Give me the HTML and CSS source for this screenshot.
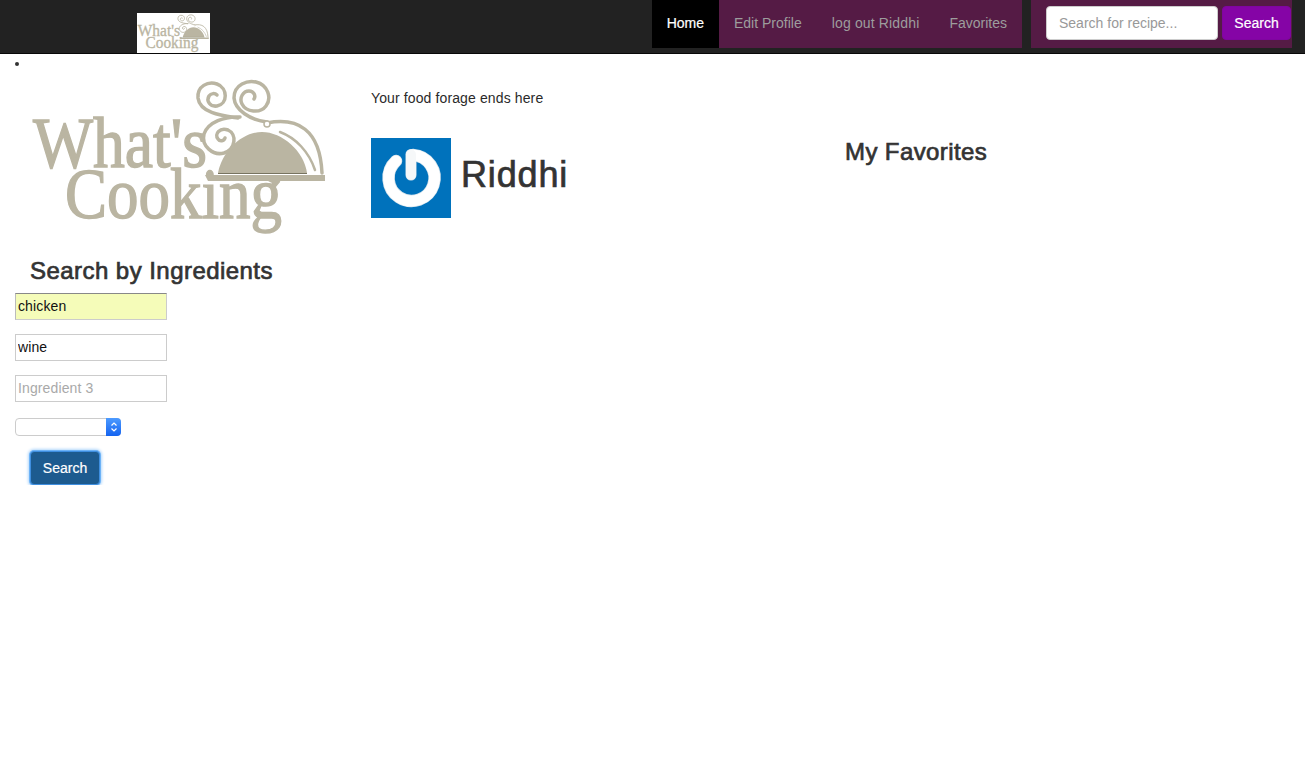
FILE: index.html
```html
<!DOCTYPE html>
<html lang="en">
<head>
<meta charset="utf-8">
<title>What's Cooking</title>
<link rel="stylesheet" href="styles.css">
</head>
<body>
<header class="navbar">
  <a class="brand" href="#" aria-label="What's Cooking">
    <svg class="brand-logo" viewBox="0 0 300 160">
      <g class="logo-solid">
        <text class="logo-word"><tspan x="3" y="91" textLength="174" lengthAdjust="spacingAndGlyphs">What's</tspan> <tspan x="35" y="142" textLength="217" lengthAdjust="spacingAndGlyphs">Cooking</tspan></text>
        <path class="logo-fill" d="M188 97C192 75 212 56 232 56s42 19 45 41z"/>
        <path class="logo-fill" d="M175 99H295v6H250l-6 3-6-3H178z"/>
      </g>
      <path class="logo-line" d="M188 97.500H277"/>
      <g class="logo-curls">
        <path d="M237 47c30-6 53 6 55 50"/>
        <path class="logo-thin" d="M250 56c16 6 29 20 35 38"/>
        <path d="M208 42C195 40 170 38 168 22 167 10 178 5 187 8c11 4 11 20 0 22-7 1-11-5-8-10 2-3 6-3 8-1"/>
        <path d="M237 46C220 44 205 34 204 22 204 8 218 4 226 6c12 3 16 16 10 24-6 8-20 6-24-2-3-6 1-13 7-13 5 0 7 5 5 8"/>
        <path d="M210 41C195 40 178 46 174 58c-3 12 9 22 20 19 12-4 13-19 4-23-8-3-14 4-10 9 2 3 6 2 7-1"/>
      </g>
      <circle class="logo-knob" cx="237" cy="48" r="3"/>
    </svg>
  </a>
  <div class="nav-right">
    <nav class="nav-links">
      <a class="nav-link active" href="#">Home</a>
      <a class="nav-link" href="#">Edit Profile</a>
      <a class="nav-link nav-link-wide" href="#">log out Riddhi</a>
      <a class="nav-link" href="#">Favorites</a>
    </nav>
    <form class="nav-search">
      <input class="nav-input" type="text" placeholder="Search for recipe...">
      <button class="nav-button" type="button">Search</button>
    </form>
  </div>
</header>

<ul class="bullet-list"><li></li></ul>

<main class="page">
  <aside class="sidebar">
    <svg class="hero-logo" viewBox="0 0 300 160" role="img" aria-label="What's Cooking logo">
      <g class="logo-solid">
        <text class="logo-word"><tspan x="3" y="91" textLength="174" lengthAdjust="spacingAndGlyphs">What's</tspan> <tspan x="35" y="142" textLength="217" lengthAdjust="spacingAndGlyphs">Cooking</tspan></text>
        <path class="logo-fill" d="M188 97C192 75 212 56 232 56s42 19 45 41z"/>
        <path class="logo-fill" d="M175 99H295v6H250l-6 3-6-3H178z"/>
      </g>
      <path class="logo-line" d="M188 97.500H277"/>
      <g class="logo-curls">
        <path d="M237 47c30-6 53 6 55 50"/>
        <path class="logo-thin" d="M250 56c16 6 29 20 35 38"/>
        <path d="M208 42C195 40 170 38 168 22 167 10 178 5 187 8c11 4 11 20 0 22-7 1-11-5-8-10 2-3 6-3 8-1"/>
        <path d="M237 46C220 44 205 34 204 22 204 8 218 4 226 6c12 3 16 16 10 24-6 8-20 6-24-2-3-6 1-13 7-13 5 0 7 5 5 8"/>
        <path d="M210 41C195 40 178 46 174 58c-3 12 9 22 20 19 12-4 13-19 4-23-8-3-14 4-10 9 2 3 6 2 7-1"/>
      </g>
      <circle class="logo-knob" cx="237" cy="48" r="3"/>
    </svg>
    <h3 class="side-title">Search by Ingredients</h3>
    <form class="ingredients">
      <input class="field field-filled" type="text" value="chicken">
      <input class="field" type="text" value="wine">
      <input class="field" type="text" placeholder="Ingredient 3">
      <div class="select-wrap">
        <select class="select" aria-label="Cuisine"><option></option></select>
        <span class="select-arrow"><svg width="8" height="12" viewBox="0 0 8 12"><path d="M1.500 4.500 4 2l2.500 2.500M1.500 7.500 4 10l2.500-2.500" fill="none" stroke="#fff" stroke-width="1.200"/></svg></span>
      </div>
      <button class="search-button" type="button">Search</button>
    </form>
  </aside>

  <section class="content">
    <div class="profile">
      <p class="tagline">Your food forage ends here</p>
      <div class="user">
        <svg class="avatar" viewBox="0 0 80 80" role="img" aria-label="Avatar">
          <rect width="80" height="80" fill="#0072bc"/>
          <path d="M25 23A23 23 0 1 0 42 17" fill="none" stroke="#d5e3ec" stroke-width="12.500" stroke-linecap="round"/>
          <path d="M40 16.500V37" fill="none" stroke="#d5e3ec" stroke-width="11" stroke-linecap="round"/>
          <path d="M25 23A23 23 0 1 0 42 17" fill="none" stroke="#fff" stroke-width="11" stroke-linecap="round"/>
          <path d="M40 16.500V37" fill="none" stroke="#f6f8f9" stroke-width="10" stroke-linecap="round"/>
        </svg>
        <h1 class="user-name">Riddhi</h1>
      </div>
    </div>
    <div class="favorites">
      <h3 class="fav-title">My Favorites</h3>
    </div>
  </section>
</main>
</body>
</html>
```

FILE: styles.css
```css
* { box-sizing: border-box; }

html, body { margin: 0; padding: 0; }

body {
  background: #fff;
  color: #333;
  font-family: "Liberation Sans", Arial, sans-serif;
  font-size: 14px;
  line-height: 20px;
}

/* logo */
.logo-solid { fill: #bab5a2; }

.logo-word {
  font-family: "Liberation Serif", serif;
  font-size: 72px;
  stroke: #bab5a2;
  stroke-width: 1.4px;
}

.logo-line { fill: none; stroke: #77735f; stroke-width: 1; }

.logo-curls {
  fill: none;
  stroke: #bab5a2;
  stroke-width: 3.5;
  stroke-linecap: round;
}

.logo-curls .logo-thin { stroke-width: 2.5; }

.logo-knob { fill: #fff; stroke: #bab5a2; stroke-width: 1.5; }

/* navbar */
.navbar {
  display: flex;
  justify-content: space-between;
  height: 54px;
  background: #222;
  border-bottom: 1px solid #080808;
}

.brand {
  display: block;
  margin-left: 137px;
  margin-top: 13px;
  width: 73px;
  height: 40px;
  background: #fff;
}

.brand-logo { display: block; width: 73px; height: 40px; }

.nav-right {
  display: flex;
  gap: 9px;
  margin-right: 13px;
  height: 48px;
}

.nav-links {
  display: flex;
  background: #551b45;
}

.nav-link {
  display: block;
  padding: 13px 15px 15px;
  color: #9d9d9d;
  text-decoration: none;
}

.nav-link-wide { letter-spacing: 0.15px; }

.nav-link.active {
  background: #000;
  color: #fff;
  -webkit-text-stroke: 0.2px #fff;
}

.nav-search {
  display: flex;
  gap: 4px;
  align-items: flex-start;
  width: 261px;
  padding: 6px 1px 0 15px;
  background: #551b45;
}

.nav-input {
  width: 172px;
  height: 34px;
  padding: 6px 12px;
  border: 1px solid #ccc;
  border-radius: 4px;
  background: #fff;
  color: #555;
  font: inherit;
}

.nav-input::placeholder { color: #999; opacity: 1; }

.nav-button {
  width: 69px;
  height: 34px;
  padding: 0;
  border: 1px solid #7f05a0;
  border-radius: 4px;
  background: #8504a6;
  color: #fff;
  font: inherit;
  -webkit-text-stroke: 0.2px #fff;
}

/* stray list */
.bullet-list {
  margin: 0;
  padding-left: 30px;
  height: 20px;
}

.bullet-list li { height: 18px; line-height: 18px; }

/* page */
.page {
  display: grid;
  grid-template-columns: 356px 1fr;
}

.sidebar { padding-left: 15px; }

.hero-logo {
  display: block;
  width: 300px;
  height: 160px;
  margin: 2px 0 0 15px;
}

.side-title {
  margin: 22px 0 9px 15px;
  font-size: 24px;
  font-weight: 400;
  line-height: 26px;
  -webkit-text-stroke: 0.7px #333;
  letter-spacing: 0.45px;
}

.ingredients {
  display: flex;
  flex-direction: column;
  align-items: flex-start;
}

.field {
  width: 152px;
  height: 27px;
  margin-bottom: 14px;
  padding: 1px 2px 3px;
  border: 1px solid #ccc;
  border-radius: 0;
  background: #fff;
  color: #111;
  font: inherit;
  font-size: 14px;
  letter-spacing: 0.12px;
}

.field::placeholder { color: #a9a9a9; opacity: 1; }

.field-filled {
  background: #f5fcb9;
  border-top-color: #888;
  border-left-color: #bbb;
}

.select-wrap {
  position: relative;
  width: 106px;
  height: 18px;
  margin-top: 2px;
}

.select {
  display: block;
  width: 106px;
  height: 18px;
  border: 1px solid #ccc;
  border-radius: 4px;
  background: #fff;
  appearance: none;
  -webkit-appearance: none;
}

.select-arrow {
  position: absolute;
  top: 0;
  right: 0;
  display: flex;
  align-items: center;
  justify-content: center;
  width: 15px;
  height: 18px;
  border-radius: 0 4px 4px 0;
  background: linear-gradient(#4d9bff, #1463f0);
}

.search-button {
  width: 70px;
  height: 34px;
  margin: 15px 0 0 15px;
  padding: 0;
  border: 1px solid #3f8fe0;
  border-radius: 4px;
  background: #1d5b8f;
  box-shadow: 0 0 0 1px #6db3f7, 0 0 3px 2px #b4d8fb;
  color: #fff;
  font: inherit;
  -webkit-text-stroke: 0.2px #fff;
}

/* content */
.content {
  display: grid;
  grid-template-columns: 474px 1fr;
  padding-left: 15px;
}

.tagline {
  margin: 14px 0 30px;
  color: #2a2a2a;
  letter-spacing: 0.12px;
}

.user {
  display: flex;
  align-items: center;
  gap: 10px;
}

.avatar { display: block; width: 80px; height: 80px; }

.user-name {
  margin: 0 0 6px;
  font-size: 36px;
  font-weight: 400;
  line-height: 40px;
  -webkit-text-stroke: 0.7px #333;
  letter-spacing: 0.85px;
}

.favorites { padding-top: 65px; }

.fav-title {
  margin: 0;
  font-size: 24px;
  font-weight: 400;
  line-height: 26px;
  -webkit-text-stroke: 0.7px #333;
  letter-spacing: 0.4px;
}
```
